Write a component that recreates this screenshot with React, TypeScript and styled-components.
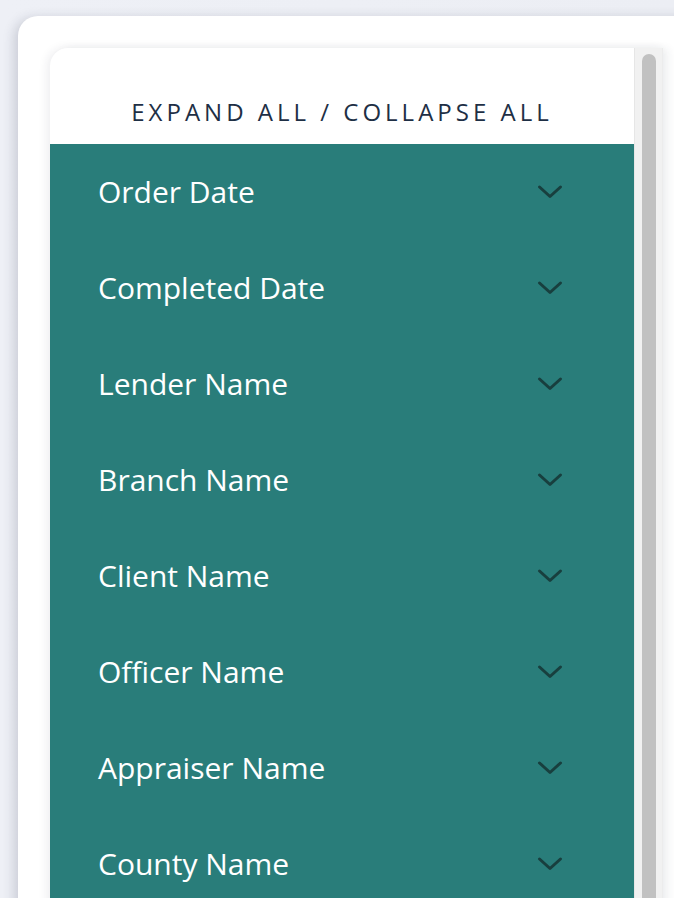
import React from "react";
import styled, { createGlobalStyle } from "styled-components";

const Global = createGlobalStyle`
  html, body { margin: 0; padding: 0; background: #eceef4; }
  body { font-family: "Open Sans", "Noto Sans", sans-serif; overflow: hidden; }
`;

const Page = styled.div`
  width: 674px;
  height: 898px;
  overflow: hidden;
  padding: 16px 0 0 18px;
  box-sizing: border-box;
  background: linear-gradient(90deg, #eef0f6 0%, #eceef4 100%);
`;

const Card = styled.div`
  width: 700px;
  height: 960px;
  background: #ffffff;
  border-radius: 20px 20px 0 0;
  box-shadow: -4px 2px 12px rgba(40, 44, 70, 0.18);
  padding: 32px 0 0 32px;
  box-sizing: border-box;
`;

const Panel = styled.div`
  display: flex;
  width: 613px;
  height: 900px;
  border-radius: 18px 0 0 0;
  background: #ffffff;
  box-shadow: -3px 0 10px rgba(40, 44, 70, 0.08), 6px 0 8px rgba(40, 44, 70, 0.06);
`;

const ListCol = styled.div`
  width: 584px;
  display: flex;
  flex-direction: column;
  overflow: hidden;
  border-top-left-radius: 18px;
`;

const Header = styled.div`
  height: 96px;
  flex-shrink: 0;
  display: flex;
  align-items: center;
  justify-content: center;
  color: #1e2f45;
  font-size: 24px;
  letter-spacing: 4px;
  padding-top: 30px;
  box-sizing: border-box;
`;

const List = styled.div`
  background: #297d7a;
  flex: 1;
  display: flex;
  flex-direction: column;
`;

const Row = styled.div`
  height: 96px;
  display: flex;
  align-items: center;
  justify-content: space-between;
  padding: 0 71px 0 48px;
  color: #ffffff;
  font-size: 30px;
  flex-shrink: 0;
`;

const Label = styled.span`
  line-height: 1;
`;

const Track = styled.div`
  width: 29px;
  background: #f1f1f1;
  border-left: 1px solid #e6e6e6;
  border-right: 1px solid #ececec;
  box-sizing: border-box;
  padding: 6px 6px 0 7px;
`;

const Thumb = styled.div`
  height: 1000px;
  background: #c1c1c1;
  border-radius: 8px 8px 0 0;
`;

const Chevron = () => (
  <svg width="26" height="16" viewBox="0 0 26 16" fill="none">
    <path d="M2.5 3 L13 12.5 L23.5 3" stroke="#183f3e" strokeWidth="3" strokeLinecap="round" strokeLinejoin="round" />
  </svg>
);

const items = [
  "Order Date",
  "Completed Date",
  "Lender Name",
  "Branch Name",
  "Client Name",
  "Officer Name",
  "Appraiser Name",
  "County Name",
];

export default function App() {
  return (
    <>
      <Global />
      <Page>
        <Card>
          <Panel>
            <ListCol>
              <Header>EXPAND ALL / COLLAPSE ALL</Header>
              <List>
                {items.map((t) => (
                  <Row key={t}>
                    <Label>{t}</Label>
                    <Chevron />
                  </Row>
                ))}
              </List>
            </ListCol>
            <Track>
              <Thumb />
            </Track>
          </Panel>
        </Card>
      </Page>
    </>
  );
}
